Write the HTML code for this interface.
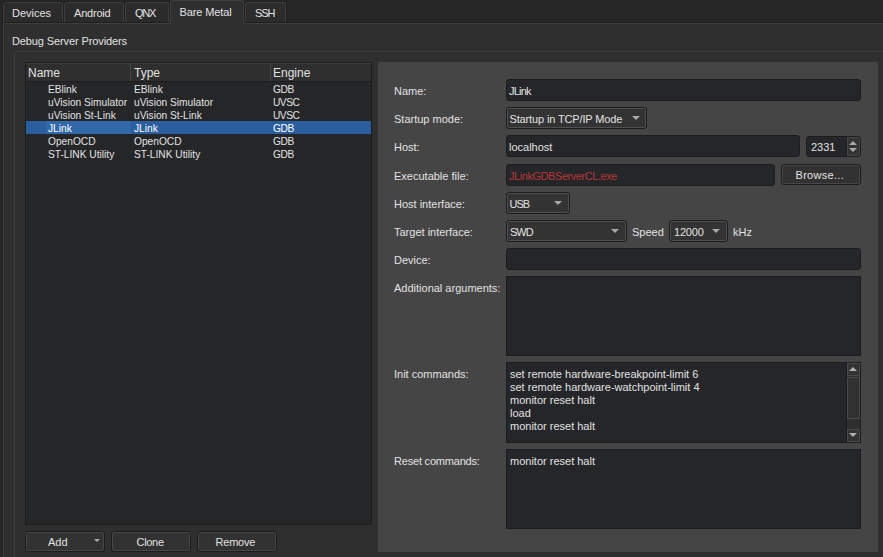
<!DOCTYPE html>
<html><head><meta charset="utf-8">
<style>
*{box-sizing:border-box;margin:0;padding:0}
html,body{width:883px;height:557px;overflow:hidden;background:#262626;font-family:"Liberation Sans",sans-serif;font-size:11px;color:#e2e2e2}
.a{position:absolute}
.t{position:absolute;line-height:13px;white-space:pre}
.tab{position:absolute;top:2px;height:21px;background:#2b2b2b;border:1px solid #3f3f3f;border-bottom:none;border-radius:3px 3px 0 0;box-shadow:0 0 0 1px #1f1f1f}
.tabsel{top:0;height:24px;background:#2f2f2f;z-index:2;box-shadow:none}
.pane{left:3px;top:22px;width:900px;height:600px;background:#2f2f2f;border-top:1px solid #1f1f1f;}
.paneb{left:3px;top:23px;width:900px;height:600px;border-left:1px solid #3e3e3e;border-top:1px solid #3e3e3e}
.grp{left:14px;top:51px;width:900px;height:600px;border:1px solid #3a3a3a;border-radius:3px}
.tree{left:25px;top:62px;width:347px;height:463px;background:#252628;border:1px solid #1c1c1c}
.hdr{left:26px;top:63px;width:345px;height:19px;background:#2f2f2f;border-top:1px solid #3c3c3c;border-bottom:1px solid #1d1d1d}
.sep{position:absolute;top:64px;width:1px;height:17px;background:#454545}
.sel{left:26px;top:121px;width:345px;height:13px;background:#2b5e9e}
.foc{left:46px;top:121px;width:85px;height:13px;background:#3068a9;border-radius:1px}
.panel{left:378px;top:62px;width:500px;height:490px;background:#454545}
.le{position:absolute;background:#252629;border:1px solid #1c1c1c;border-radius:3px}
.te{position:absolute;background:#252629;border:1px solid #1c1c1c}
.cb{position:absolute;background:#333333;border:1px solid #1c1c1c;border-radius:3px;box-shadow:inset 0 0 0 1px #505050}
.btn{position:absolute;background:#323232;border:1px solid #1c1c1c;border-radius:3px;box-shadow:inset 0 0 0 1px #474747}
.arr{position:absolute;width:0;height:0;border-left:4px solid transparent;border-right:4px solid transparent;border-top:4px solid #a8a8a8}
.red{color:#b83636}
</style></head><body>
<!-- tabs -->
<div class="tab" style="left:3px;width:60px"></div>
<div class="tab" style="left:64px;width:60px"></div>
<div class="tab" style="left:125px;width:44px"></div>
<div class="tab" style="left:245px;width:41px"></div>
<div class="a pane"></div>
<div class="a paneb"></div>
<div class="tab tabsel" style="left:170px;width:74px"></div>
<div class="t" style="left:12px;top:7px">Devices</div>
<div class="t" style="left:74px;top:7px;letter-spacing:-0.2px">Android</div>
<div class="t" style="left:135px;top:7px;letter-spacing:-1.2px">QNX</div>
<div class="t" style="left:179.5px;top:6px;z-index:3;letter-spacing:-0.1px">Bare Metal</div>
<div class="t" style="left:255px;top:7px;letter-spacing:-1.1px">SSH</div>

<div class="t" style="left:12px;top:35px;letter-spacing:-0.11px">Debug Server Providers</div>
<div class="a grp"></div>

<!-- tree -->
<div class="a tree"></div>
<div class="a hdr"></div>
<div class="sep" style="left:130px"></div>
<div class="sep" style="left:270px"></div>
<div class="a sel"></div>
<div class="a foc"></div>
<div class="t" style="left:28px;top:67px;font-size:12px">Name</div>
<div class="t" style="left:134px;top:67px;font-size:12px">Type</div>
<div class="t" style="left:273px;top:67px;font-size:12px">Engine</div>

<div class="t" style="left:48px;top:83px;font-size:10.2px">EBlink</div>
<div class="t" style="left:134px;top:83px;font-size:10.2px">EBlink</div>
<div class="t" style="left:273px;top:83px;font-size:10.2px;letter-spacing:-0.4px">GDB</div>
<div class="t" style="left:48px;top:96px;font-size:10.2px">uVision Simulator</div>
<div class="t" style="left:134px;top:96px;font-size:10.2px">uVision Simulator</div>
<div class="t" style="left:273px;top:96px;font-size:10.2px;letter-spacing:-0.5px">UVSC</div>
<div class="t" style="left:48px;top:109px;font-size:10.2px">uVision St-Link</div>
<div class="t" style="left:134px;top:109px;font-size:10.2px">uVision St-Link</div>
<div class="t" style="left:273px;top:109px;font-size:10.2px;letter-spacing:-0.5px">UVSC</div>
<div class="t" style="left:48px;top:122px;font-size:10.2px;color:#fff">JLink</div>
<div class="t" style="left:134px;top:122px;font-size:10.2px;color:#fff">JLink</div>
<div class="t" style="left:273px;top:122px;font-size:10.2px;color:#fff;letter-spacing:-0.4px">GDB</div>
<div class="t" style="left:48px;top:135px;font-size:10.2px">OpenOCD</div>
<div class="t" style="left:134px;top:135px;font-size:10.2px">OpenOCD</div>
<div class="t" style="left:273px;top:135px;font-size:10.2px;letter-spacing:-0.4px">GDB</div>
<div class="t" style="left:48px;top:148px;font-size:10.2px">ST-LINK Utility</div>
<div class="t" style="left:134px;top:148px;font-size:10.2px">ST-LINK Utility</div>
<div class="t" style="left:273px;top:148px;font-size:10.2px;letter-spacing:-0.4px">GDB</div>

<!-- buttons -->
<div class="btn" style="left:25px;top:531px;width:80px;height:21px"></div>
<div class="a" style="left:94px;top:539px;width:0;height:0;border-left:3px solid transparent;border-right:3px solid transparent;border-top:3px solid #a8a8a8"></div>
<div class="t" style="left:48px;top:536px">Add</div>
<div class="btn" style="left:111px;top:531px;width:80px;height:21px"></div>
<div class="t" style="left:136.5px;top:536px;letter-spacing:-0.3px">Clone</div>
<div class="btn" style="left:197px;top:531px;width:80px;height:21px"></div>
<div class="t" style="left:215.5px;top:536px;letter-spacing:-0.2px">Remove</div>

<!-- right panel -->
<div class="a panel"></div>
<div class="t" style="left:394px;top:85px">Name:</div>
<div class="t" style="left:394px;top:113px">Startup mode:</div>
<div class="t" style="left:394px;top:141px">Host:</div>
<div class="t" style="left:394px;top:170px">Executable file:</div>
<div class="t" style="left:394px;top:198px">Host interface:</div>
<div class="t" style="left:394px;top:226px">Target interface:</div>
<div class="t" style="left:394px;top:254px">Device:</div>
<div class="t" style="left:394px;top:282px">Additional arguments:</div>
<div class="t" style="left:394px;top:368px">Init commands:</div>
<div class="t" style="left:394px;top:455px;letter-spacing:-0.2px">Reset commands:</div>

<div class="le" style="left:506px;top:79px;width:355px;height:22px"></div>
<div class="t" style="left:509px;top:85px;letter-spacing:-0.8px">JLink</div>

<div class="cb" style="left:506px;top:107px;width:141px;height:22px"></div>
<div class="t" style="left:509.5px;top:113px;letter-spacing:-0.14px">Startup in TCP/IP Mode</div>
<div class="arr" style="left:632px;top:116px"></div>

<div class="le" style="left:506px;top:135px;width:294px;height:22px"></div>
<div class="t" style="left:509px;top:141px">localhost</div>
<div class="le" style="left:806px;top:136px;width:55px;height:21px"></div>
<div class="a" style="left:846px;top:137px;width:14px;height:19px;background:#333;border-left:1px solid #1c1c1c;box-shadow:inset 0 0 0 1px #474747;border-radius:0 3px 3px 0"></div>
<div class="t" style="left:811px;top:141px">2331</div>
<div class="a" style="left:849px;top:141px;width:0;height:0;border-left:4px solid transparent;border-right:4px solid transparent;border-bottom:4px solid #a8a8a8"></div>
<div class="a" style="left:849px;top:148px;width:0;height:0;border-left:4px solid transparent;border-right:4px solid transparent;border-top:4px solid #a8a8a8"></div>

<div class="le" style="left:506px;top:164px;width:269px;height:22px"></div>
<div class="t red" style="left:509px;top:170px;letter-spacing:-0.44px">JLinkGDBServerCL.exe</div>
<div class="btn" style="left:781px;top:164px;width:80px;height:21px"></div>
<div class="t" style="left:795.5px;top:169px;letter-spacing:0.3px">Browse...</div>

<div class="cb" style="left:506px;top:192px;width:64px;height:22px"></div>
<div class="t" style="left:509.5px;top:198px;letter-spacing:-1px">USB</div>
<div class="arr" style="left:554px;top:201px"></div>

<div class="cb" style="left:506px;top:220px;width:121px;height:22px"></div>
<div class="t" style="left:510px;top:226px;letter-spacing:-1px">SWD</div>
<div class="arr" style="left:611px;top:229px"></div>
<div class="t" style="left:632px;top:226px">Speed</div>
<div class="cb" style="left:669px;top:220px;width:59px;height:22px"></div>
<div class="t" style="left:674px;top:226px;letter-spacing:-0.2px">12000</div>
<div class="arr" style="left:712px;top:229px"></div>
<div class="t" style="left:733px;top:226px">kHz</div>

<div class="le" style="left:506px;top:248px;width:355px;height:22px"></div>

<div class="te" style="left:506px;top:276px;width:355px;height:80px"></div>

<div class="te" style="left:506px;top:362px;width:355px;height:81px"></div>

<div class="a" style="left:846px;top:363px;width:14px;height:79px;background:#2f2f2f;border-left:1px solid #1c1c1c"></div>
<div class="a" style="left:847px;top:363px;width:13px;height:13px;background:#333;border:1px solid #4a4a4a"></div>
<div class="a" style="left:849px;top:367px;width:0;height:0;border-left:4px solid transparent;border-right:4px solid transparent;border-bottom:4px solid #b0b0b0"></div>
<div class="a" style="left:847px;top:377px;width:13px;height:42px;background:#313131;border:1px solid #4a4a4a"></div>
<div class="a" style="left:847px;top:429px;width:13px;height:13px;background:#333;border:1px solid #4a4a4a"></div>
<div class="a" style="left:849px;top:433px;width:0;height:0;border-left:4px solid transparent;border-right:4px solid transparent;border-top:4px solid #b0b0b0"></div>
<div class="t" style="left:510px;top:368px">set remote hardware-breakpoint-limit 6
set remote hardware-watchpoint-limit 4
monitor reset halt
load
monitor reset halt</div>

<div class="te" style="left:506px;top:449px;width:355px;height:80px"></div>
<div class="t" style="left:510px;top:455px">monitor reset halt</div>
</body></html>
